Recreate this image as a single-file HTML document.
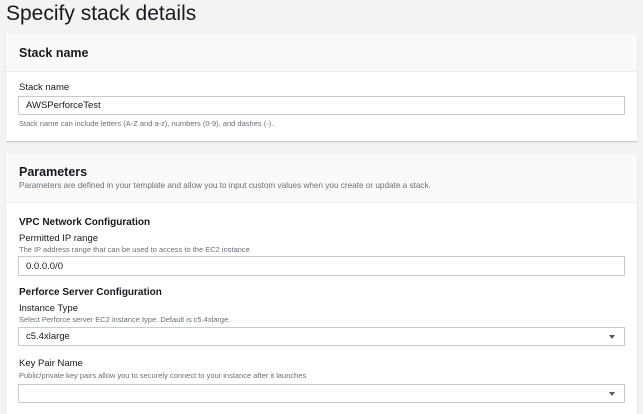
<!DOCTYPE html>
<html><head><style>
*{margin:0;padding:0;box-sizing:border-box}
body{width:643px;height:410px;overflow:hidden;background:#f2f3f3;font-family:"Liberation Sans",sans-serif;color:#16191f;position:relative}
.a{position:absolute;white-space:nowrap}
.card{position:absolute;left:6px;width:631px;background:#fff;box-shadow:0 1px 1px rgba(0,0,0,.2);}
.hd{background:#fafafa;border-bottom:1px solid #eaeded}
.b{font-weight:bold}
.inp{position:absolute;left:18px;width:607px;border:1px solid #c6cccc;background:#fff;font-size:9.5px;padding-left:7px;display:flex;align-items:center}
.tri{position:absolute;right:9px;top:50%;margin-top:-2px;width:0;height:0;border-left:3.5px solid transparent;border-right:3.5px solid transparent;border-top:4px solid #545b64}
.h{font-size:7.5px;color:#687078}
.l{font-size:9.5px}
</style></head><body>
<div class="a" style="left:6px;top:2px;font-size:21px">Specify stack details</div>
<div class="card" style="top:34px;height:107px"><div class="hd" style="height:38px"></div></div>
<div class="a b" style="left:19px;top:46px;font-size:12.5px">Stack name</div>
<div class="a l" style="left:19px;top:82px">Stack name</div>
<div class="inp" style="top:96px;height:19px">AWSPerforceTest</div>
<div class="a h" style="left:19px;top:119px">Stack name can include letters (A-Z and a-z), numbers (0-9), and dashes (-).</div>
<div class="card" style="top:154px;height:260px"><div class="hd" style="height:49px"></div></div>
<div class="a b" style="left:19px;top:165px;font-size:12.5px">Parameters</div>
<div class="a h" style="left:19px;top:181px;font-size:8.2px">Parameters are defined in your template and allow you to input custom values when you create or update a stack.</div>
<div class="a b" style="left:19px;top:217px;font-size:10px">VPC Network Configuration</div>
<div class="a l" style="left:19px;top:233px">Permitted IP range</div>
<div class="a h" style="left:19px;top:245px">The IP address range that can be used to access to the EC2 instance</div>
<div class="inp" style="top:256px;height:20px">0.0.0.0/0</div>
<div class="a b" style="left:19px;top:287px;font-size:10px">Perforce Server Configuration</div>
<div class="a l" style="left:19px;top:303px">Instance Type</div>
<div class="a h" style="left:19px;top:315px">Select Perforce server EC2 instance type. Default is c5.4xlarge.</div>
<div class="inp" style="top:327px;height:19px">c5.4xlarge<div class="tri"></div></div>
<div class="a l" style="left:19px;top:358px">Key Pair Name</div>
<div class="a h" style="left:19px;top:371px">Public/private key pairs allow you to securely connect to your instance after it launches</div>
<div class="inp" style="top:384px;height:19px"><div class="tri"></div></div>
</body></html>
